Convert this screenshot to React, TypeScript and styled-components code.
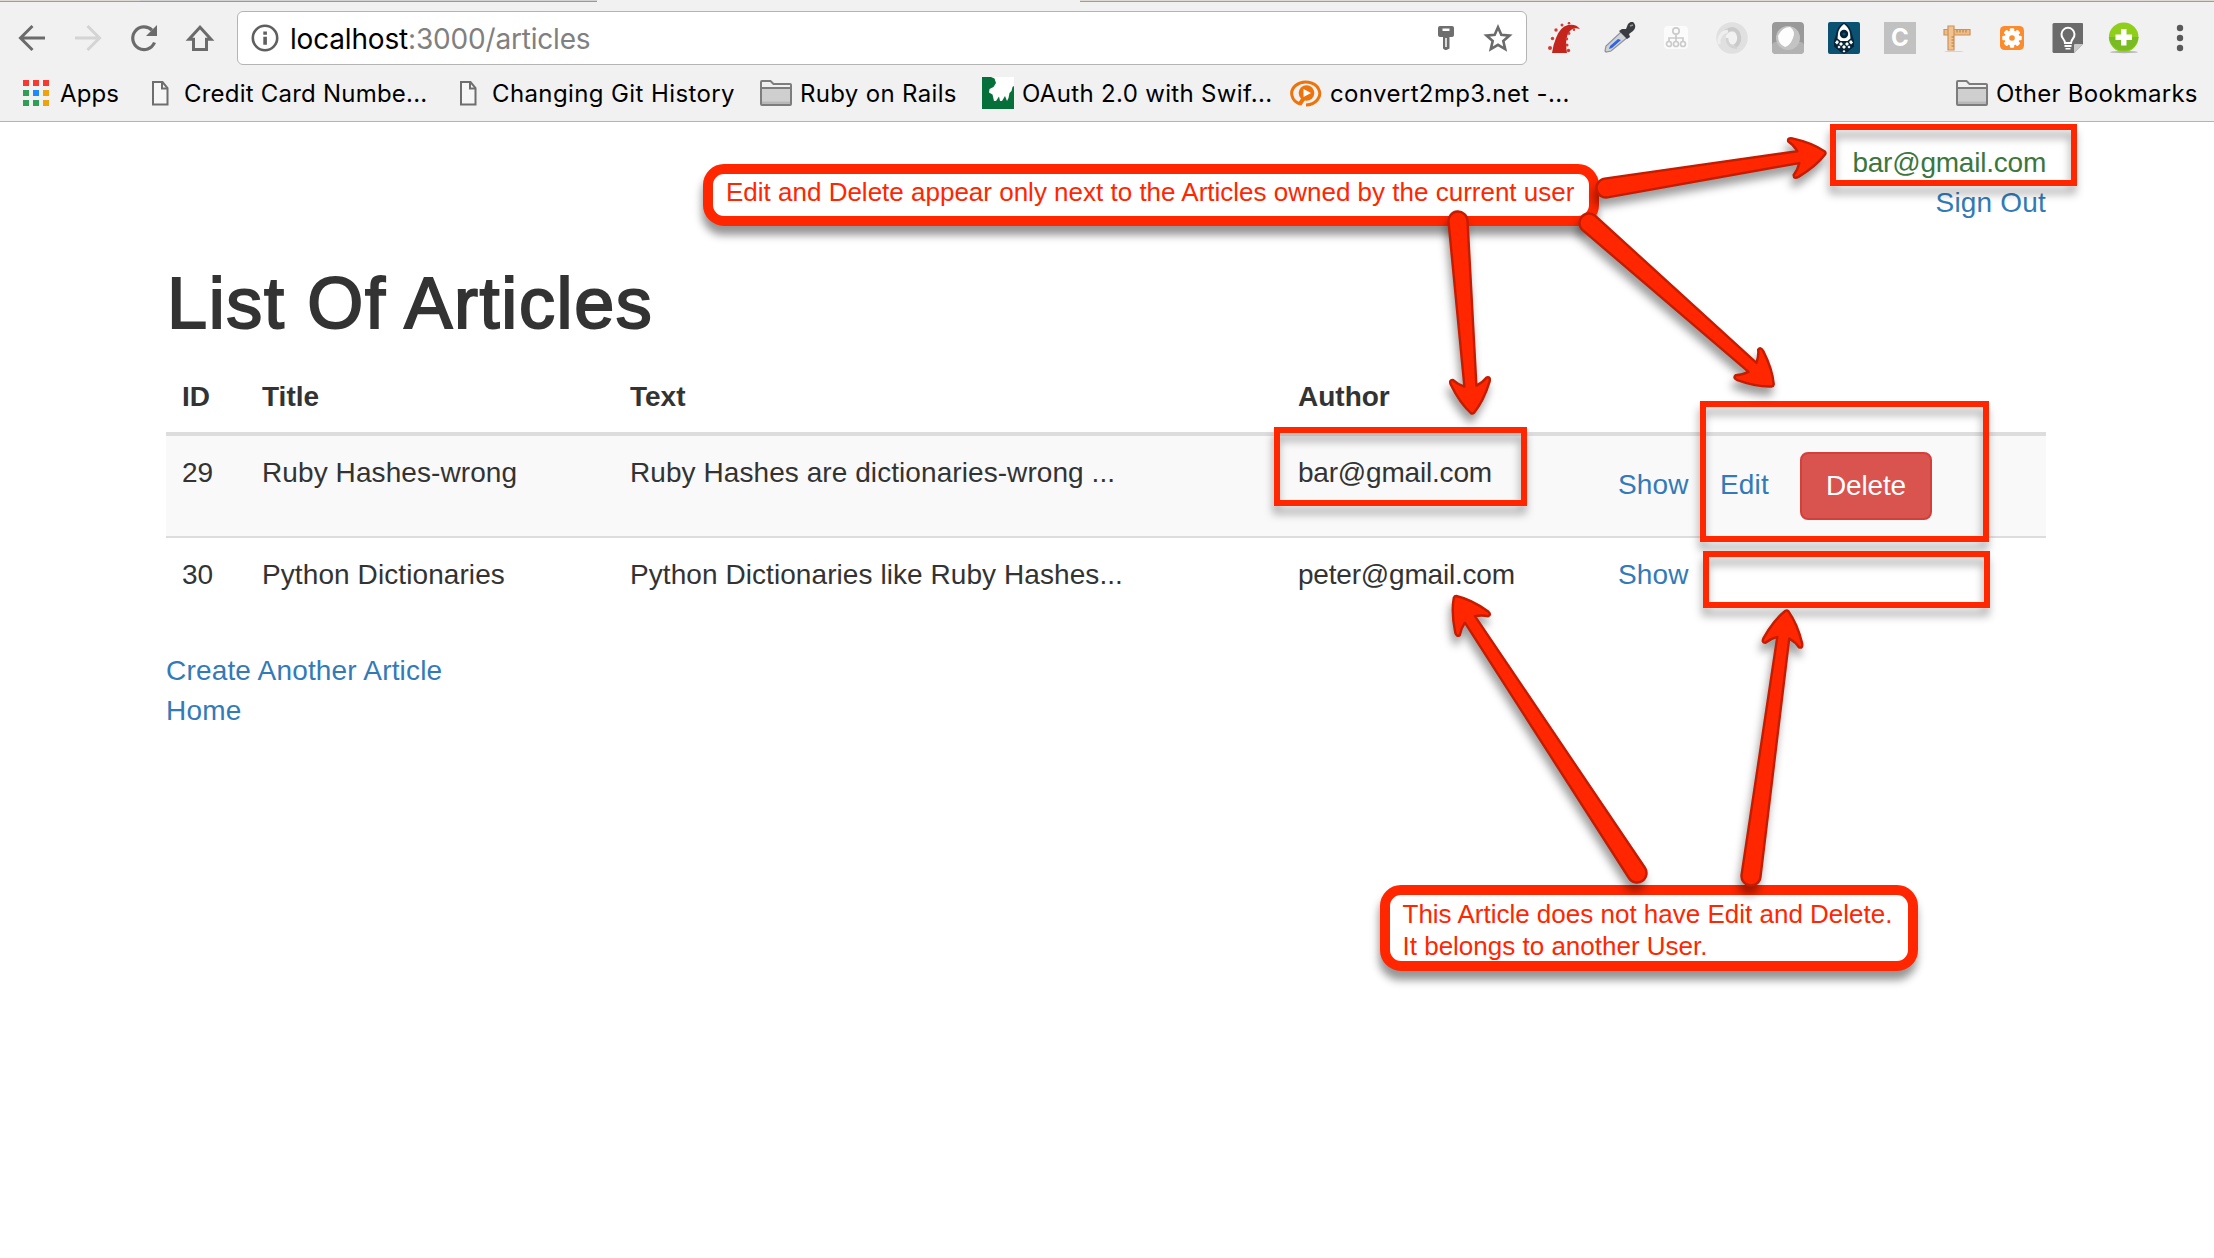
import React from "react";
import styled, { createGlobalStyle } from "styled-components";

const GlobalStyle = createGlobalStyle`
  * { box-sizing: border-box; }
  html, body { margin: 0; padding: 0; background: #fff; }
  body { overflow: hidden; }
`;

const pageFont = `"Liberation Sans", Arial, sans-serif`;
const chromeFont = `Inter, "Liberation Sans", sans-serif`;
const red = "#ff2600";

const Window = styled.div`
  position: relative;
  width: 2214px;
  height: 1258px;
  overflow: hidden;
  background: #fff;
  font-family: ${pageFont};
  color: #333;
`;

/* ---------- browser chrome ---------- */

const Chrome = styled.header`
  height: 122px;
  background: #f1f1f1;
  border-bottom: 1px solid #b3b3b3;
  font-family: ${chromeFont};
`;

const TabStrip = styled.div`
  display: flex;
  height: 2px;
`;

const TabEdge = styled.div<{ $w?: number; $bg: string; $line: string }>`
  ${(p) => (p.$w ? `width: ${p.$w}px;` : "flex: 1;")}
  background: ${(p) => p.$bg};
  border-bottom: 1px solid ${(p) => p.$line};
`;

const Toolbar = styled.div`
  display: flex;
  align-items: center;
  height: 72px;
  padding-left: 16px;
`;

const NavButtons = styled.div`
  display: flex;
  gap: 24px;
  width: 221px;
`;

const AddressBar = styled.div`
  display: flex;
  align-items: center;
  width: 1290px;
  height: 54px;
  padding: 0 12px 0 11px;
  background: #fff;
  border: 1px solid #b4b4b4;
  border-radius: 6px;
`;

const Url = styled.div`
  flex: 1;
  margin-left: 9px;
  padding-top: 2px;
  font-size: 28px;
  line-height: 34px;
  letter-spacing: -0.18px;
  color: #808080;
  white-space: pre;
`;

const UrlHost = styled.span`
  color: #000;
`;

const AddressIcons = styled.div`
  display: flex;
  gap: 20px;
`;

const Extensions = styled.div`
  display: flex;
  gap: 24px;
  margin-left: 21px;
`;

const Bookmarks = styled.nav`
  display: flex;
  align-items: center;
  height: 38px;
  padding-left: 20px;
`;

const Bookmark = styled.div<{ $w: number; $ls?: number }>`
  display: flex;
  align-items: center;
  gap: 8px;
  width: ${(p) => p.$w}px;
  flex: none;
  font-size: 24px;
  line-height: 30px;
  letter-spacing: ${(p) => p.$ls ?? 0}px;
  color: #000;
  white-space: nowrap;
`;

const BookmarkLabel = styled.span`
  padding-top: 2px;
`;

const Icon = styled.svg`
  display: block;
  flex: none;
`;

/* ---------- page ---------- */

const Page = styled.main`
  width: 1880px;
  margin: 0 0 0 166px;
  padding-top: 21px;
  font-size: 28px;
  line-height: 40px;
`;

const Session = styled.div`
  display: flex;
  flex-direction: column;
  align-items: flex-end;
`;

const CurrentUser = styled.span`
  color: #3c763d;
  letter-spacing: -0.22px;
`;

const Link = styled.a`
  color: #337ab7;
  text-decoration: none;
  letter-spacing: 0.18px;
  white-space: nowrap;
`;

const Heading = styled.h1`
  margin: 40px 0 18px 1px;
  font-size: 72px;
  line-height: 80px;
  font-weight: 400;
  letter-spacing: 1.65px;
  -webkit-text-stroke: 2px #333;
`;

const Table = styled.table`
  width: 100%;
  margin-bottom: 40px;
  table-layout: fixed;
  border-collapse: separate;
  border-spacing: 0;
`;

const HeadCell = styled.th<{ $w?: number }>`
  ${(p) => (p.$w ? `width: ${p.$w}px;` : "")}
  padding: 16px 16px 15px;
  border-bottom: 4px solid #ddd;
  text-align: left;
`;

const Row = styled.tr<{ $striped?: boolean }>`
  background: ${(p) => (p.$striped ? "#f9f9f9" : "#fff")};
`;

const Cell = styled.td<{ $pad?: number; $ls?: number }>`
  padding: ${(p) => p.$pad ?? 17}px 0 ${(p) => 32 - (p.$pad ?? 17)}px 16px;
  letter-spacing: ${(p) => p.$ls ?? 0}px;
  vertical-align: top;
  white-space: nowrap;
  tr + tr > & {
    border-top: 2px solid #ddd;
  }
`;

const DeleteButton = styled.button`
  display: block;
  height: 68px;
  padding: 12px 24px;
  border: 2px solid #d43f3a;
  border-radius: 8px;
  background: #d9534f;
  color: #fff;
  font: 28px/40px ${pageFont};
  letter-spacing: -0.15px;
`;

const FooterLinks = styled.div`
  display: flex;
  flex-direction: column;
  align-items: flex-start;
  padding-top: 1px;
`;

/* ---------- annotations laid over the page ---------- */

const Frame = styled.div<{ $x: number; $y: number; $w: number; $h: number }>`
  position: absolute;
  left: ${(p) => p.$x}px;
  top: ${(p) => p.$y}px;
  width: ${(p) => p.$w}px;
  height: ${(p) => p.$h}px;
  border: 6px solid ${red};
  filter: drop-shadow(-1px 8px 4px rgba(0, 0, 0, 0.32));
`;

const Callout = styled.div<{ $x: number; $y: number; $w: number; $h: number; $pad: number }>`
  position: absolute;
  left: ${(p) => p.$x}px;
  top: ${(p) => p.$y}px;
  width: ${(p) => p.$w}px;
  height: ${(p) => p.$h}px;
  padding: ${(p) => p.$pad}px 13px 0;
  border: 10px solid ${red};
  border-radius: 21px;
  background: #fff;
  box-shadow: -1px 9px 9px rgba(0, 0, 0, 0.42);
  color: ${red};
  font-size: 26px;
  line-height: 32px;
  white-space: pre;
`;

const ArrowLayer = styled.svg`
  position: absolute;
  left: 0;
  top: 0;
  pointer-events: none;
  filter: drop-shadow(-2px 8px 4px rgba(0, 0, 0, 0.38));
`;

type ArrowProps = { tail: [number, number]; tip: [number, number] };

function Arrow({ tail, tip }: ArrowProps) {
  const dx = tip[0] - tail[0];
  const dy = tip[1] - tail[1];
  const len = Math.hypot(dx, dy);
  const angle = (Math.atan2(dy, dx) * 180) / Math.PI;
  const d = `M${-len} -9.5 L-28 -6 Q-31 -13 -35.5 -17 Q-36 -21 -31 -19.5 Q-12 -12 -1 -1.5 Q0 0 -1 1.5
    Q-12 12 -31 19.5 Q-36 21 -35.5 17 Q-31 13 -28 6 L${-len} 9.5 A9.5 9.5 0 0 1 ${-len} -9.5 Z`;
  return (
    <path
      d={d}
      transform={`translate(${tip[0]} ${tip[1]}) rotate(${angle})`}
      fill={red}
      stroke="#c41c00"
      strokeWidth="2.4"
      strokeLinejoin="round"
    />
  );
}

/* ---------- icons ---------- */

const BackIcon = ({ color }: { color: string }) => (
  <Icon width="32" height="32" viewBox="0 0 32 32" fill="none" stroke={color} strokeWidth="3">
    <path d="M29 16H5M16.5 4L4.5 16l12 12" />
  </Icon>
);

const ForwardIcon = ({ color }: { color: string }) => (
  <Icon width="32" height="32" viewBox="0 0 32 32" fill="none" stroke={color} strokeWidth="3">
    <path d="M3 16h24M15.500 4l12 12-12 12" />
  </Icon>
);

const ReloadIcon = () => (
  <Icon width="32" height="32" viewBox="0 0 32 32">
    <path d="M26.500 20.500A11.300 11.300 0 1 1 24 8.200" fill="none" stroke="#6b6b6b" strokeWidth="3.200" />
    <path d="M29 3v11H18z" fill="#6b6b6b" />
  </Icon>
);

const HomeIcon = () => (
  <Icon width="32" height="32" viewBox="0 0 32 32">
    <path d="M16 5.200L5 17.200h4.500v10.300h13V17.200H27z" fill="none" stroke="#6b6b6b" strokeWidth="3" />
  </Icon>
);

const InfoIcon = () => (
  <Icon width="32" height="32" viewBox="0 0 32 32">
    <circle cx="16" cy="16" r="12.200" fill="none" stroke="#5f5f5f" strokeWidth="2.600" />
    <path d="M14.300 9.500h3.600v3.300h-3.600zM14.300 14.800h3.600v8h-3.600z" fill="#5f5f5f" />
  </Icon>
);

const KeyIcon = () => (
  <Icon width="32" height="32" viewBox="0 0 32 32">
    <path
      fillRule="evenodd"
      d="M10 4h12q2 0 2 2v7q0 2-2 2h-2.500v11.500L16.500 28h-1.500l-2-1.500V15H10q-2 0-2-2V6q0-2 2-2zM12.500 6.500v2.500h7V6.500z"
      fill="#6e6e6e"
    />
    <path d="M16 16v9" stroke="#fff" strokeWidth="1.500" />
  </Icon>
);

const StarIcon = () => (
  <Icon width="32" height="32" viewBox="0 0 32 32">
    <path
      d="M16 5.200l3.300 7.600 8.200.8-6.200 5.400 1.900 8.100-7.200-4.300-7.200 4.300 1.900-8.100-6.200-5.400 8.200-.8z"
      fill="none"
      stroke="#6b6b6b"
      strokeWidth="2.600"
    />
  </Icon>
);

const AppsIcon = () => (
  <Icon width="32" height="32" viewBox="0 0 32 32">
    <path d="M3 3h6v6H3zM13 3h6v6h-6zM23 3h6v6h-6z" fill="#f9382f" />
    <path d="M3 13h6v6H3zM3 23h6v6H3zM13 23h6v6h-6z" fill="#2f9e57" />
    <path d="M13 13h6v6h-6z" fill="#1a8cff" />
    <path d="M23 13h6v6h-6zM23 23h6v6h-6z" fill="#f0a20c" />
  </Icon>
);

const PageIcon = () => (
  <Icon width="32" height="32" viewBox="0 0 32 32">
    <path d="M9 5h9.500l5 6v16.500H9z" fill="#f6f6f6" stroke="#6e6e6e" strokeWidth="2" />
    <path d="M18 5v6.500h5.500" fill="none" stroke="#6e6e6e" strokeWidth="2" />
  </Icon>
);

const FolderIcon = () => (
  <Icon width="32" height="32" viewBox="0 0 32 32">
    <path d="M1 27V5q0-1 1-1h8l3 3h17q1 0 1 1v19q0 1-1 1H2q-1 0-1-1z" fill="#f0f0f0" />
    <path d="M2 11.500h28V27H2z" fill="#cfcfcf" />
    <path d="M2 24.500h28V27H2z" fill="#b8b8b8" />
    <path d="M1 11h30M1 27V5q0-1 1-1h8.500l3 3H30q1 0 1 1v19q0 1-1 1H2q-1 0-1-1z" fill="none" stroke="#7d7d7d" strokeWidth="2" />
  </Icon>
);

const GreenIcon = () => (
  <Icon width="32" height="32" viewBox="0 0 32 32">
    <path d="M0 0h32v32H0z" fill="#05703a" />
    <path d="M9 0H32V9L30.500 10 29.500 14 27.500 16 26.500 21 25 24 23 19 20 24 18 24 17 19.500 14 24 12 24 10.500 17.500 7 15.500 7.500 12 11.500 10 14 6 12.500 1.500z" fill="#fff" />
  </Icon>
);

const OrangeIcon = () => (
  <Icon width="32" height="32" viewBox="0 0 32 32" fill="none">
    <path d="M10 27A14 11.500 0 1 1 16 28" stroke="#ee730a" strokeWidth="3" />
    <path d="M9.500 27.500L16 18" stroke="#ee730a" strokeWidth="4" />
    <circle cx="16.500" cy="16" r="7.800" fill="#ee730a" />
    <path d="M13.500 12l7.500 4-7.500 4z" fill="#fff" />
  </Icon>
);

const RubyTentacle = () => (
  <Icon width="32" height="32" viewBox="0 0 32 32">
    <path d="M4 31Q5 23 8 16 12 5 20 3q8-1.500 12 4-6-2-9 1-7 6-4 23z" fill="#c5241d" />
    <g fill="#d63a33">
      <circle cx="2" cy="26" r="2" />
      <circle cx="4.500" cy="16.500" r="1.700" />
      <circle cx="8" cy="8" r="1.700" />
      <circle cx="14" cy="3" r="1.500" />
      <circle cx="21" cy="1.200" r="1.300" />
      <circle cx="21" cy="11.500" r="1.400" />
      <circle cx="18.800" cy="17" r="1.400" />
      <circle cx="19" cy="23" r="1.500" />
      <circle cx="20.500" cy="28.500" r="1.700" />
      <circle cx="26" cy="7.800" r="1.200" />
    </g>
  </Icon>
);

const DropperIcon = () => (
  <Icon width="32" height="32" viewBox="0 0 32 32">
    <path d="M18 9l6 6L7 29l-5 1-1-1 1-5z" fill="#cfd3d8" stroke="#8d9196" strokeWidth="1.200" />
    <path d="M14 17l3 1-9 8-3 1 1-3z" fill="#2f62e6" />
    <path d="M15 9l3-2 4 0 2-5q4-4 6-1 3 4-1 8l-4 3 1 3-3 2z" fill="#3b3d40" />
    <path d="M26 4l3-1" stroke="#999" strokeWidth="1.500" />
  </Icon>
);

const TreeIcon = () => (
  <Icon width="32" height="32" viewBox="0 0 32 32">
    <rect x="4" y="4" width="24" height="23" rx="4" fill="#fbfbfb" />
    <g fill="none" stroke="#cbcbcb" strokeWidth="1.700">
      <circle cx="16" cy="9" r="3.200" />
      <circle cx="9" cy="22" r="2.500" />
      <circle cx="16" cy="22" r="2.500" />
      <circle cx="23" cy="22" r="2.500" />
      <path d="M16 12v7.500M9 19.500V16h14v3.500" />
    </g>
  </Icon>
);

const RingIcon = () => (
  <Icon width="32" height="32" viewBox="0 0 32 32" fill="none">
    <circle cx="16" cy="16" r="11" stroke="#e0e0e0" strokeWidth="9.500" />
    <path d="M10 9.500Q18 4 22 11q3.500 8-3 13.500" stroke="#cacaca" strokeWidth="4" />
    <path d="M3 22Q2 11 12 9" stroke="#eeeeee" strokeWidth="3" />
    <path d="M11 16q0 9 10 10" stroke="#d2d2d2" strokeWidth="2.500" />
  </Icon>
);

const MoonIcon = () => (
  <Icon width="32" height="32" viewBox="0 0 32 32">
    <rect width="32" height="32" rx="4" fill="#999" />
    <rect y="20" width="32" height="12" rx="4" fill="#b2b2b2" />
    <circle cx="16" cy="16" r="12" fill="#c3c3c3" />
    <path d="M6 14Q10 5 18 5q6 4 3 11-3 8-8 9-7-3-7-11z" fill="#fdfdfd" />
  </Icon>
);

const RocketIcon = () => (
  <Icon width="32" height="32" viewBox="0 0 32 32">
    <rect width="32" height="32" rx="2" fill="#0b5272" />
    <path d="M16 0.500q7 4 8 12l2 6v6l-6 5-4 2.500-4-2.500-6-5v-6l2-6q1-8 8-12z" fill="#062437" />
    <path d="M16 2q5 3.500 6 9.500l.5 5-3 2.500h-7l-3-2.500.5-5Q11 5.500 16 2z" fill="#fff" />
    <circle cx="16" cy="12" r="4.200" fill="#062437" />
    <circle cx="16" cy="12" r="1.600" fill="#0b5272" />
    <path
      d="M9 18l2 2-2 2.500L7 20.500zM23 18l2 2.500-2 2-2-2.500zM13 20l2 2-2 2-2-2zM19 20l2 2-2 2-2-2zM16 23l2 2-2 2-2-2zM11 23.500l1.500 1.500L11 26.500 9.500 25zM21 23.500l1.500 1.500-1.500 1.500-1.500-1.500zM16 28l1.500 1.300L16 30.500l-1.500-1.200z"
      fill="#fff"
    />
  </Icon>
);

const LetterBadge = styled.div`
  display: flex;
  align-items: center;
  justify-content: center;
  width: 32px;
  height: 32px;
  background: #c1c1c1;
  color: #fff;
  font: 700 24px/32px ${chromeFont};
`;

const RulerIcon = () => (
  <Icon width="32" height="32" viewBox="0 0 32 32">
    <path d="M4 29h20l-3 1H6z" fill="#d4d4d4" />
    <path d="M4 7.500h26v5.500H4z" fill="#eebd84" stroke="#d0905a" strokeWidth="1.200" />
    <path d="M8 4h6v24H8z" fill="#f0c48e" stroke="#d0905a" strokeWidth="1.200" />
    <path d="M17 8v2.500M20 8v2.500M23 8v2.500M26 8v2.500M11.500 15H14M11.500 18H14M11.500 21H14M11.500 24H14" stroke="#b7793f" strokeWidth="1" />
  </Icon>
);

const GearIcon = () => (
  <Icon width="32" height="32" viewBox="0 0 32 32">
    <rect x="4" y="4" width="24" height="24" rx="4.500" fill="#fb8b2c" />
    <g fill="#fff">
      <circle cx="16" cy="16" r="7.500" />
      {[0, 45, 90, 135, 180, 225, 270, 315].map((a) => (
        <rect key={a} x="13.8" y="6.300" width="4.400" height="5" rx="1" transform={`rotate(${a} 16 16)`} />
      ))}
    </g>
    <circle cx="16" cy="16" r="2.800" fill="#fb8b2c" />
  </Icon>
);

const BulbIcon = () => (
  <Icon width="32" height="32" viewBox="0 0 32 32">
    <path d="M2 1h28q1 0 1 1v20l-9 9H2q-1.500 0-1.500-1.500V2.500Q.5 1 2 1z" fill="#6b6b6b" />
    <path d="M22 31v-8q0-1 1-1h8z" fill="#c9c9c9" />
    <path d="M13 21q0-2-2-4.500a6.500 6.500 0 1 1 10 0Q19 19 19 21z" fill="none" stroke="#fff" strokeWidth="2" />
    <path d="M12.500 23h7v2h-7zM13.500 26h5v1.500h-5z" fill="#fff" />
  </Icon>
);

const PlusIcon = () => (
  <Icon width="32" height="32" viewBox="0 0 32 32">
    <ellipse cx="16" cy="30" rx="14" ry="1.200" fill="#b5b5b5" />
    <circle cx="15.700" cy="15.200" r="14.800" fill="#8fce1b" />
    <path d="M1 15a14.800 14.800 0 0 0 29.500 0z" fill="#78bb22" />
    <path d="M13 7h5.500v5.500H24V18h-5.500v5.500H13V18H7.500v-5.500H13z" fill="#fff" />
  </Icon>
);

const MenuIcon = () => (
  <Icon width="32" height="32" viewBox="0 0 32 32" fill="#5a5a5a">
    <circle cx="16" cy="6" r="3.200" />
    <circle cx="16" cy="16" r="3.200" />
    <circle cx="16" cy="26" r="3.200" />
  </Icon>
);

const bookmarks = [
  { label: "Apps", icon: AppsIcon, width: 124, spacing: 0.1 },
  { label: "Credit Card Numbe...", icon: PageIcon, width: 308, spacing: 0.22 },
  { label: "Changing Git History", icon: PageIcon, width: 308, spacing: 0.39 },
  { label: "Ruby on Rails", icon: FolderIcon, width: 222, spacing: 0.33 },
  { label: "OAuth 2.0 with Swif...", icon: GreenIcon, width: 308, spacing: 0.33 },
  { label: "convert2mp3.net -...", icon: OrangeIcon, width: 666, spacing: 0.38 },
  { label: "Other Bookmarks", icon: FolderIcon, width: 250, spacing: 0.28 },
];

const articles = [
  { id: 29, title: "Ruby Hashes-wrong", text: "Ruby Hashes are dictionaries-wrong ...", author: "bar@gmail.com", own: true },
  { id: 30, title: "Python Dictionaries", text: "Python Dictionaries like Ruby Hashes...", author: "peter@gmail.com", own: false },
];

export default function App() {
  return (
    <Window>
      <GlobalStyle />
      <Chrome>
        <TabStrip>
          <TabEdge $w={140} $bg="#dedad5" $line="#a39c95" />
          <TabEdge $w={457} $bg="#d3d3d3" $line="#999" />
          <TabEdge $w={483} $bg="#f1f1f1" $line="#f1f1f1" />
          <TabEdge $bg="#dedad5" $line="#a39c95" />
        </TabStrip>
        <Toolbar>
          <NavButtons>
            <BackIcon color="#6b6b6b" />
            <ForwardIcon color="#d4d4d4" />
            <ReloadIcon />
            <HomeIcon />
          </NavButtons>
          <AddressBar>
            <InfoIcon />
            <Url>
              <UrlHost>localhost</UrlHost>:3000/articles
            </Url>
            <AddressIcons>
              <KeyIcon />
              <StarIcon />
            </AddressIcons>
          </AddressBar>
          <Extensions>
            <RubyTentacle />
            <DropperIcon />
            <TreeIcon />
            <RingIcon />
            <MoonIcon />
            <RocketIcon />
            <LetterBadge>C</LetterBadge>
            <RulerIcon />
            <GearIcon />
            <BulbIcon />
            <PlusIcon />
            <MenuIcon />
          </Extensions>
        </Toolbar>
        <Bookmarks>
          {bookmarks.map(({ label, icon: BookmarkIcon, width, spacing }) => (
            <Bookmark key={label} $w={width} $ls={spacing}>
              <BookmarkIcon />
              <BookmarkLabel>{label}</BookmarkLabel>
            </Bookmark>
          ))}
        </Bookmarks>
      </Chrome>

      <Page>
        <Session>
          <CurrentUser>bar@gmail.com</CurrentUser>
          <Link>Sign Out</Link>
        </Session>
        <Heading>List Of Articles</Heading>
        <Table>
          <thead>
            <tr>
              <HeadCell $w={80}>ID</HeadCell>
              <HeadCell $w={368}>Title</HeadCell>
              <HeadCell $w={668}>Text</HeadCell>
              <HeadCell $w={320}>Author</HeadCell>
              <HeadCell $w={102} />
              <HeadCell $w={80} />
              <HeadCell />
            </tr>
          </thead>
          <tbody>
            {articles.map((a) => (
              <Row key={a.id} $striped={a.own}>
                <Cell>{a.id}</Cell>
                <Cell $ls={0.09}>{a.title}</Cell>
                <Cell $ls={0.07}>{a.text}</Cell>
                <Cell $ls={-0.2}>{a.author}</Cell>
                <Cell $pad={a.own ? 29 : 17}><Link>Show</Link></Cell>
                <Cell $pad={a.own ? 29 : 17}>{a.own && <Link>Edit</Link>}</Cell>
                <Cell $pad={16}>{a.own && <DeleteButton>Delete</DeleteButton>}</Cell>
              </Row>
            ))}
          </tbody>
        </Table>
        <FooterLinks>
          <Link>Create Another Article</Link>
          <Link>Home</Link>
        </FooterLinks>
      </Page>

      <Frame $x={1830} $y={123.500} $w={247} $h={62.500} />
      <Frame $x={1273.500} $y={426.500} $w={253.500} $h={79} />
      <Frame $x={1700} $y={401} $w={289} $h={141} />
      <Frame $x={1703} $y={551} $w={287} $h={57} />
      <Callout $x={703} $y={163.500} $w={896} $h={62} $pad={2}>
        Edit and Delete appear only next to the Articles owned by the current user
      </Callout>
      <Callout $x={1379.500} $y={885} $w={538} $h={86} $pad={3}>
        {"This Article does not have Edit and Delete.\nIt belongs to another User."}
      </Callout>
      <ArrowLayer width="2214" height="1258">
        <Arrow tail={[1606, 188]} tip={[1826, 152.700]} />
        <Arrow tail={[1458, 221]} tip={[1472.500, 414]} />
        <Arrow tail={[1589, 223]} tip={[1773.500, 386]} />
        <Arrow tail={[1637, 873]} tip={[1454.500, 596]} />
        <Arrow tail={[1751, 876]} tip={[1787, 610]} />
      </ArrowLayer>
    </Window>
  );
}
